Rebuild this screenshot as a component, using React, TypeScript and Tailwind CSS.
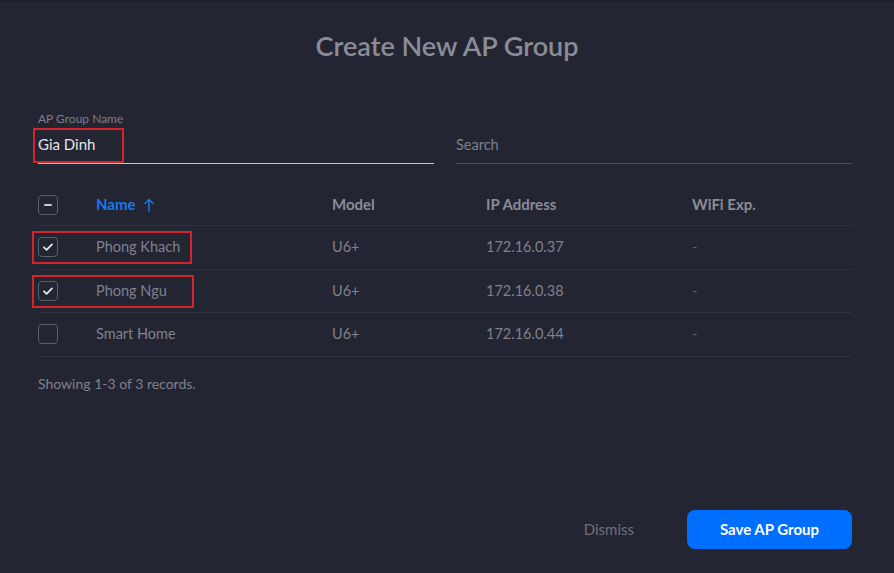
import React from "react";

const ROWS = [
  { name: "Phong Khach", model: "U6+", ip: "172.16.0.37", checked: true },
  { name: "Phong Ngu", model: "U6+", ip: "172.16.0.38", checked: true },
  { name: "Smart Home", model: "U6+", ip: "172.16.0.44", checked: false },
];

function Box({ checked, minus }: { checked?: boolean; minus?: boolean }) {
  return (
    <div className="w-[20px] h-[20px] rounded-[4px] border border-[#5b5e6c] flex items-center justify-center">
      {checked && (
        <svg width="12" height="12" viewBox="0 0 12 12" fill="none">
          <path d="M2 6.3l2.6 2.5L10 3.4" stroke="#e6e7ea" strokeWidth="1.8" strokeLinecap="round" strokeLinejoin="round" />
        </svg>
      )}
      {minus && <div className="w-[8px] h-[2px] bg-[#c9cad0] rounded" />}
    </div>
  );
}

export default function App() {
  return (
    <div
      className="w-[894px] h-[573px] bg-[#242533] text-[#8d8f9b] overflow-hidden border-t-2 border-[#1f2029]"
      style={{ fontFamily: "Lato, 'Noto Sans', sans-serif" }}
    >
      <div className="text-center text-[27px] font-semibold text-[#8a8c98] pt-[28px] leading-[32px]">
        Create New AP Group
      </div>

      <div className="ml-[38px] w-[814px] mt-[50px] flex gap-[22px]">
        <div className="w-[396px]">
          <div className="text-[12px] text-[#7b7e8a] leading-[14px]">AP Group Name</div>
          <div className="relative h-[38px] flex items-center border-b border-[#c6c7cc]">
            <span className="text-[15px] text-[#e4e5e9]">Gia Dinh</span>
            <div className="absolute left-[-5px] top-[2px] w-[91px] h-[35px] border-2 border-[#d3232b]" />
          </div>
        </div>
        <div className="flex-1">
          <div className="h-[14px]" />
          <div className="h-[38px] flex items-center border-b border-[#4a4c5a] text-[14.5px] text-[#7e808c]">
            Search
          </div>
        </div>
      </div>

      <div className="ml-[38px] w-[814px] mt-[20px] text-[14.5px]">
        <div className="flex items-center h-[42px] border-b border-[#30323f] font-bold text-[#8a8c98] text-[15px]">
          <div className="w-[58px]"><Box minus /></div>
          <div className="w-[236px] text-[#1877f2] flex items-center gap-[8px]">
            Name
            <svg width="10" height="14" viewBox="0 0 10 14" fill="none">
              <path d="M5 13V1.5M1 5.5L5 1.5l4 4" stroke="#1877f2" strokeWidth="1.5" strokeLinecap="round" strokeLinejoin="round" />
            </svg>
          </div>
          <div className="w-[154px]">Model</div>
          <div className="w-[206px]">IP Address</div>
          <div>WiFi Exp.</div>
        </div>
        {ROWS.map((r) => (
          <div key={r.name} className="relative flex items-center h-[43.5px] border-b border-[#30323f] text-[#7f818d]">
            <div className="w-[58px]"><Box checked={r.checked} /></div>
            <div className="w-[236px]">{r.name}</div>
            <div className="w-[154px]">{r.model}</div>
            <div className="w-[206px]">{r.ip}</div>
            <div className="text-[#5f6170]">-</div>
            {r.checked && (
              <div
                className={`absolute left-[-6px] top-[5px] h-[33px] border-2 border-[#d3232b] ${r.name === "Phong Khach" ? "w-[160px]" : "w-[162px]"}`}
              />
            )}
          </div>
        ))}
        <div className="mt-[16px] text-[14px] text-[#7f818d]">Showing 1-3 of 3 records.</div>
      </div>

      <div className="flex justify-end items-center mt-[116px] mr-[42px] gap-[53px]">
        <button type="button" className="text-[15px] text-[#6e707c]">Dismiss</button>
        <button
          type="button"
          className="w-[165px] h-[39px] rounded-[8px] bg-[#006fff] text-white text-[15px] font-bold"
        >
          Save AP Group
        </button>
      </div>
    </div>
  );
}
